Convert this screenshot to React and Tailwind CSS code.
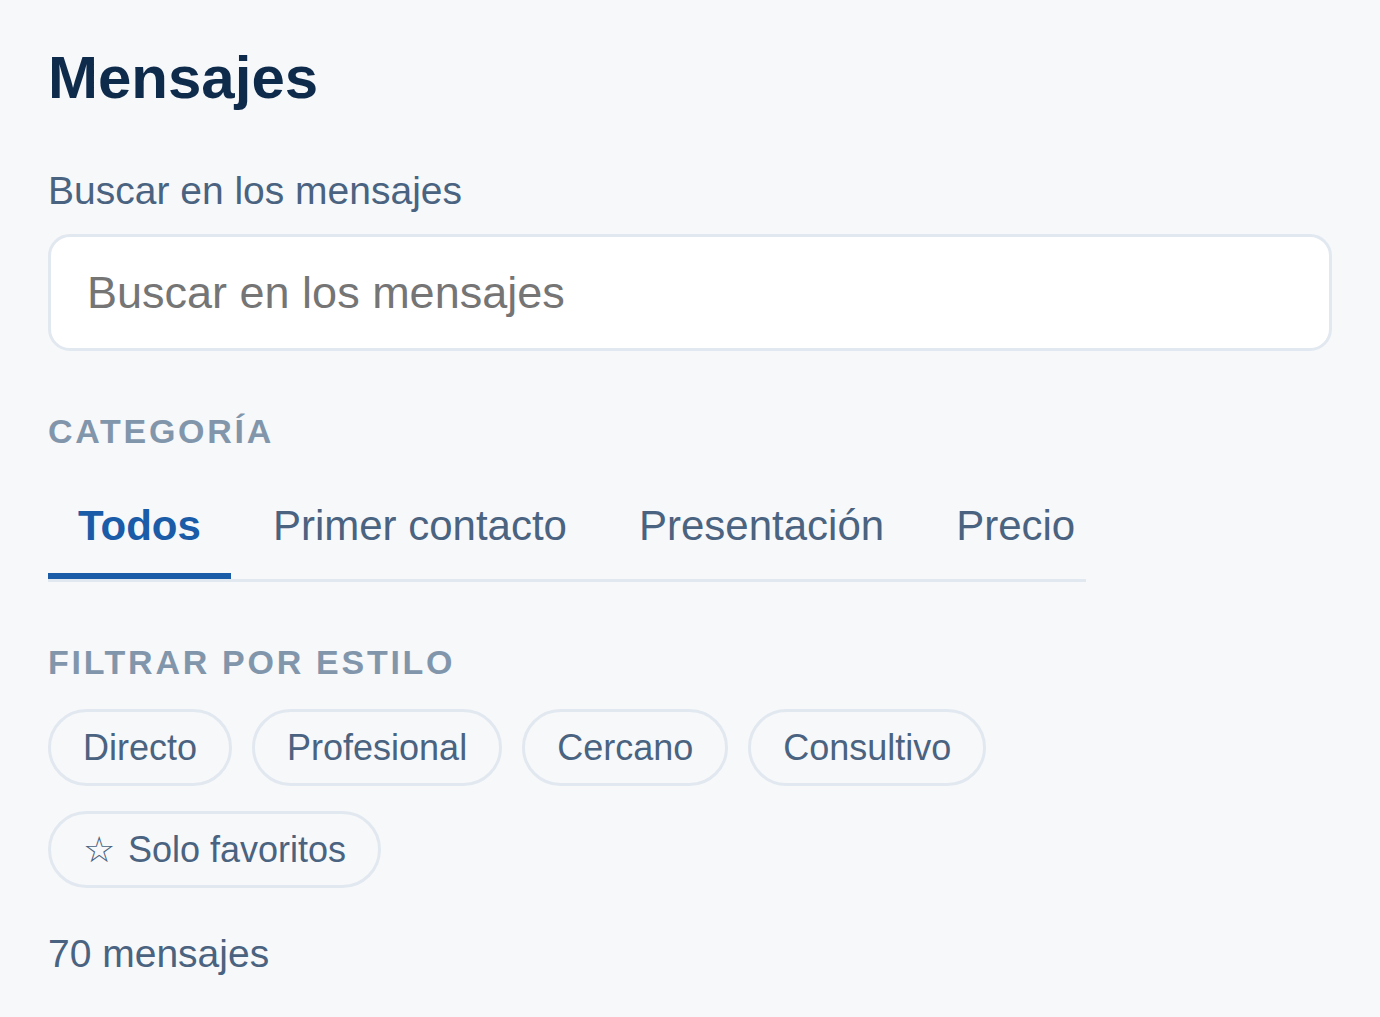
import React, { useState } from 'react';

const categories = ['Todos', 'Primer contacto', 'Presentación', 'Precio'];
const styles = ['Directo', 'Profesional', 'Cercano', 'Consultivo'];

const App = () => {
  const [active, setActive] = useState('Todos');
  const [query, setQuery] = useState('');

  const headingClasses = "text-[34px] font-bold uppercase tracking-[0.08em] text-[#8296ab]";
  const chipClasses = "h-[77px] flex items-center px-[32px] rounded-full border-[3px] border-[#e2e8f0] text-[36px] text-[#4a6380] bg-transparent";

  return (
    <div className="min-h-screen bg-[#f7f8fa] px-12 pt-12 pb-12 font-['Liberation_Sans',Arial,sans-serif] leading-[normal]">
      <h1 className="text-[60px] leading-none font-bold text-[#0f2b4c]">Mensajes</h1>

      <label htmlFor="search" className="block mt-[61px] mb-[21px] text-[39px] text-[#4a6380]">
        Buscar en los mensajes
      </label>
      <input
        id="search"
        type="text"
        value={query}
        onChange={(e) => setQuery(e.target.value)}
        placeholder="Buscar en los mensajes"
        className="block w-full h-[117px] px-[36px] bg-white border-[3px] border-[#e2e8f0] rounded-[22px] text-[45px] text-[#1f2937] placeholder:text-[#757575] outline-none"
      />

      <div className={`mt-[61px] ${headingClasses}`}>Categoría</div>

      <div className="mt-[27px] w-[1038px] flex gap-3 border-b-[3px] border-[#e2e8f0] overflow-hidden">
        {categories.map((c) => (
          <button
            key={c}
            onClick={() => setActive(c)}
            className={
              c === active
                ? "shrink-0 px-[30px] pt-[24px] pb-[23px] text-[42px] font-bold text-[#1a5ca8] border-b-[6px] border-[#1a5ca8]"
                : "shrink-0 px-[30px] pt-[24px] pb-[23px] text-[42px] text-[#4a6380] border-b-[6px] border-transparent"
            }
          >
            {c}
          </button>
        ))}
      </div>

      <div className={`mt-[61px] ${headingClasses}`}>Filtrar por estilo</div>

      <div className="mt-[27px] flex flex-wrap gap-x-5 gap-y-[26px]">
        {styles.map((s) => (
          <button key={s} className={chipClasses}>{s}</button>
        ))}
      </div>
      <div className="mt-[25px] flex">
        <button className={chipClasses}>
          <span className="mr-[13px]">☆</span>
          <span>Solo favoritos</span>
        </button>
      </div>

      <p className="mt-[44px] text-[39px] text-[#4a6380]">70 mensajes</p>
    </div>
  );
};

export default App;
